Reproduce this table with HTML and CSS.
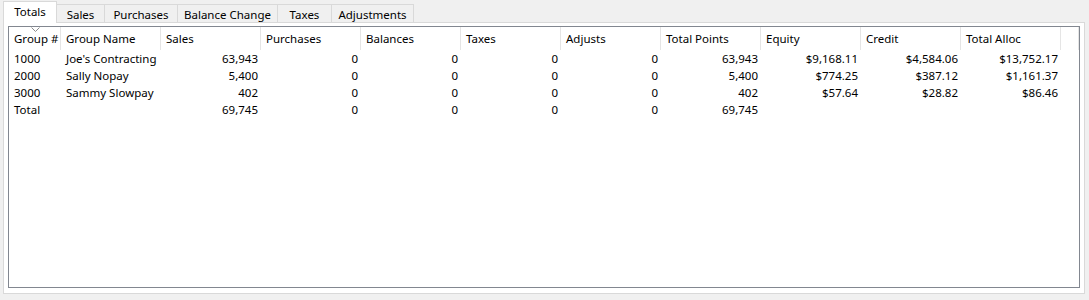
FILE: index.html
```html
<!DOCTYPE html>
<html>
<head>
<meta charset="utf-8">
<link rel="stylesheet" href="styles.css">
</head>
<body>
<div class="window">
  <div class="tabs">
    <div class="tab active">Totals</div>
    <div class="tab w-sales">Sales</div>
    <div class="tab w-purch">Purchases</div>
    <div class="tab w-bal">Balance Change</div>
    <div class="tab w-tax">Taxes</div>
    <div class="tab w-adj">Adjustments</div>
  </div>
  <div class="panel">
    <div class="list">
      <div class="row header">
        <div class="cell c0 sorted">Group #<span class="chev"><svg width="9" height="5" viewBox="0 0 9 5"><path d="M0.5 0.5 L4.5 4.5 L8.5 0.5" fill="none" stroke="#8c8c8c" stroke-width="1"/></svg></span></div>
        <div class="cell">Group Name</div>
        <div class="cell">Sales</div>
        <div class="cell">Purchases</div>
        <div class="cell">Balances</div>
        <div class="cell">Taxes</div>
        <div class="cell">Adjusts</div>
        <div class="cell">Total Points</div>
        <div class="cell">Equity</div>
        <div class="cell">Credit</div>
        <div class="cell">Total Alloc</div>
        <div class="cell filler"></div>
      </div>
      <div class="row">
        <div class="cell c0">1000</div><div class="cell">Joe's Contracting</div>
        <div class="cell num">63,943</div><div class="cell num">0</div><div class="cell num">0</div><div class="cell num">0</div><div class="cell num">0</div>
        <div class="cell num">63,943</div><div class="cell num">$9,168.11</div><div class="cell num">$4,584.06</div><div class="cell num">$13,752.17</div>
      </div>
      <div class="row">
        <div class="cell c0">2000</div><div class="cell">Sally Nopay</div>
        <div class="cell num">5,400</div><div class="cell num">0</div><div class="cell num">0</div><div class="cell num">0</div><div class="cell num">0</div>
        <div class="cell num">5,400</div><div class="cell num">$774.25</div><div class="cell num">$387.12</div><div class="cell num">$1,161.37</div>
      </div>
      <div class="row">
        <div class="cell c0">3000</div><div class="cell">Sammy Slowpay</div>
        <div class="cell num">402</div><div class="cell num">0</div><div class="cell num">0</div><div class="cell num">0</div><div class="cell num">0</div>
        <div class="cell num">402</div><div class="cell num">$57.64</div><div class="cell num">$28.82</div><div class="cell num">$86.46</div>
      </div>
      <div class="row">
        <div class="cell c0">Total</div><div class="cell"></div>
        <div class="cell num">69,745</div><div class="cell num">0</div><div class="cell num">0</div><div class="cell num">0</div><div class="cell num">0</div>
        <div class="cell num">69,745</div><div class="cell num"></div><div class="cell num"></div><div class="cell num"></div>
      </div>
    </div>
  </div>
</div>
</body>
</html>
```

FILE: styles.css
```css
html, body {
  margin: 0;
  padding: 0;
  background: #f0f0f0;
}
body {
  font-family: "Noto Sans", "Open Sans", "DejaVu Sans", sans-serif;
  font-size: 11.5px;
  color: #000;
  width: 1089px;
  height: 300px;
  overflow: hidden;
}
.window {
  padding: 1px 0 0 3px;
}
.tabs {
  display: flex;
  align-items: flex-end;
  height: 21px;
  position: relative;
  z-index: 2;
}
.tab {
  box-sizing: border-box;
  height: 18px;
  border: 1px solid #d9d9d9;
  border-bottom: none;
  border-left: none;
  background: #f0f0f0;
  display: flex;
  align-items: center;
  justify-content: center;
  padding-top: 1px;
}
.tab.active {
  height: 22px;
  width: 54px;
  border-left: 1px solid #d9d9d9;
  background: #fff;
  margin-bottom: -1px;
  padding-top: 0;
  padding-bottom: 2px;
}
.w-sales { width: 48px; }
.w-purch { width: 73px; }
.w-bal { width: 100px; }
.w-tax { width: 54px; }
.w-adj { width: 82px; }
.panel {
  box-sizing: border-box;
  width: 1082px;
  height: 272px;
  border: 1px solid #d9d9d9;
  background: #fff;
  padding: 3px 4px 5px 4px;
}
.list {
  box-sizing: border-box;
  height: 262px;
  border: 1px solid #828790;
  background: #fff;
  overflow: hidden;
}
.row {
  display: flex;
  height: 17px;
  line-height: 17px;
}
.row.header {
  height: 23px;
  line-height: 23px;
}
.cell {
  box-sizing: border-box;
  width: 100px;
  flex: none;
  padding: 0 5px 0 5px;
  white-space: nowrap;
  overflow: hidden;
}
.cell.c0 {
  width: 52px;
}
.header .cell {
  border-right: 1px solid #e5e5e5;
}
.header .cell.filler {
  width: 18px;
}
.cell.num {
  text-align: right;
  padding-right: 3px;
}
.sorted {
  position: relative;
}
.chev {
  position: absolute;
  top: 0;
  left: 22px;
  line-height: 0;
}
```
